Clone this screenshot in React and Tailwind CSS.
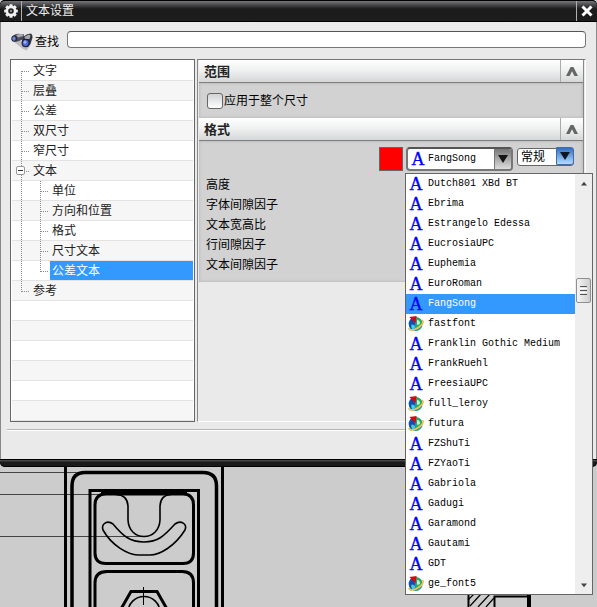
import { useState } from "react";

const sections = [
  { label: "文字", depth: 0 },
  { label: "层叠", depth: 0 },
  { label: "公差", depth: 0 },
  { label: "双尺寸", depth: 0 },
  { label: "窄尺寸", depth: 0 },
  { label: "文本", depth: 0, parent: true },
  { label: "单位", depth: 1 },
  { label: "方向和位置", depth: 1 },
  { label: "格式", depth: 1 },
  { label: "尺寸文本", depth: 1 },
  { label: "公差文本", depth: 1, last: true },
  { label: "参考", depth: 0, last: true },
];

const emptyRows = [0, 1, 2, 3, 4, 5];

const fonts = [
  { name: "Dutch801 XBd BT" },
  { name: "Ebrima" },
  { name: "Estrangelo Edessa" },
  { name: "EucrosiaUPC" },
  { name: "Euphemia" },
  { name: "EuroRoman" },
  { name: "FangSong" },
  { name: "fastfont", native: true },
  { name: "Franklin Gothic Medium" },
  { name: "FrankRuehl" },
  { name: "FreesiaUPC" },
  { name: "full_leroy", native: true },
  { name: "futura", native: true },
  { name: "FZShuTi" },
  { name: "FZYaoTi" },
  { name: "Gabriola" },
  { name: "Gadugi" },
  { name: "Garamond" },
  { name: "Gautami" },
  { name: "GDT" },
  { name: "ge_font5", native: true },
];

const fields = [
  { id: "height", label: "高度" },
  { id: "char-gap", label: "字体间隙因子" },
  { id: "aspect", label: "文本宽高比" },
  { id: "line-gap", label: "行间隙因子" },
  { id: "text-gap", label: "文本间隙因子" },
];

function GearIcon() {
  return (
    <svg viewBox="0 0 14 14" className="h-[14px] w-[14px]" aria-hidden="true">
      <g fill="#f0f0f0">
        {[0, 45, 90, 135].map((a) => (
          <rect key={a} x="5.4" y="0.2" width="3.2" height="13.6" rx="0.6" transform={`rotate(${a} 7 7)`} />
        ))}
        <circle cx="7" cy="7" r="5.4" />
      </g>
      <circle cx="7" cy="7" r="2.8" fill="#222" />
      <circle cx="7" cy="7" r="1.2" fill="#888" />
    </svg>
  );
}

function BinocularsIcon() {
  return (
    <svg viewBox="0 0 22 18" className="h-[18px] w-[22px]" aria-hidden="true">
      <path d="M3 9 L10 8 L19 13 L15.500 17.500 L12 16 Z" fill="#bdbdbd" />
      <path d="M1 4 Q3 1 7 0.8 L13 1.2 L13 6 L7 8.500 Q2 9.500 0.500 6.500 Z" fill="#4a4d55" />
      <path d="M5 2 Q8 0.400 12 1.200 L12.500 3 L7 4.500 Z" fill="#a9adb5" />
      <path d="M12 4 L16 1.2 L20 0.600 Q21.800 2 21.500 4.500 L19.500 11 Q17.500 15 13.500 13.500 Q10 12 11 8 Z" fill="#33353b" />
      <path d="M13.500 4 L17.500 1.500 L19.500 2.500 L18.500 6 L14 6 Z" fill="#a4a8b0" />
      <ellipse cx="3.200" cy="5.600" rx="2.800" ry="3.200" fill="#23263a" />
      <ellipse cx="3" cy="5.600" rx="1.700" ry="2.200" fill="#7185d8" />
      <ellipse cx="14.600" cy="10" rx="4" ry="4.200" fill="#1c2038" />
      <ellipse cx="14.600" cy="10" rx="2.900" ry="3.100" fill="#4f68d6" />
      <ellipse cx="14" cy="9.200" rx="1.400" ry="1.600" fill="#9db0f4" />
    </svg>
  );
}

function GlobeIcon() {
  return (
    <svg viewBox="0 0 16 16" className="h-4 w-4 shrink-0" aria-hidden="true">
      <circle cx="7.6" cy="8" r="7" fill="#1e8fd0" />
      <path d="M0.8 6.500 Q2 3 5 1.800 L7 8 L4.500 14 Q0.800 12 0.800 6.500Z" fill="#0f4fae" />
      <path d="M8 1.200 Q13.500 2 14.300 7 Q14.300 12 9 14.800 Q6 13 8 10 Q9 7 8 1.200Z" fill="#2fae52" />
      <path d="M9 4 Q12 4 12 7.500 Q10.500 9.500 9 8.500Z" fill="#c4f5d0" />
      <path d="M3.500 8.500 Q7 8.500 7 11.500 L5 13.500 Q2.500 12 3.500 8.500Z" fill="#3fd0dc" />
      <path d="M0.700 12 Q1.500 15 6 13.600 Q12 11.500 14.600 7.500 Q15.800 5 14 4.200" fill="none" stroke="#f0bf5c" strokeWidth="1.700" />
      <path d="M1.400 1 L8.600 0 L7.400 7.600 Z" fill="#cf0a14" />
    </svg>
  );
}

function LetterIcon() {
  return (
    <span
      aria-hidden="true"
      className="w-4 shrink-0 text-center font-['Liberation_Serif',serif] text-[18px] leading-5 text-[#0000ff] [-webkit-text-stroke:0.4px_#0000ff]"
    >
      A
    </span>
  );
}

function TreeLines({ row }) {
  return (
    <svg className="h-5 w-[38px] shrink-0" viewBox="0 0 38 20" aria-hidden="true" shapeRendering="crispEdges">
      <g stroke="#8c8c8c" strokeWidth="1" strokeDasharray="1 1">
        <line x1="9.5" y1={row.label === "文字" ? 10 : 0} x2="9.5" y2={row.last && row.depth === 0 ? 11 : 20} />
        {row.depth === 0 && <line x1="10" y1="10.5" x2="18" y2="10.5" />}
        {row.depth === 1 && <line x1="28.5" y1="0" x2="28.5" y2={row.last ? 11 : 20} />}
        {row.depth === 1 && <line x1="29" y1="10.5" x2="37" y2="10.5" />}
      </g>
    </svg>
  );
}

function TreeRow({ row, active, onSelect }) {
  return (
    <li
      role="treeitem"
      aria-level={row.depth + 1}
      aria-selected={active}
      aria-expanded={row.parent ? true : undefined}
      className="relative flex h-5 border-b border-[#e3e3e3] odd:bg-white even:bg-[#f6f6f6]"
    >
      <div className={row.depth ? "flex w-[38px] overflow-hidden" : "flex w-[19px] overflow-hidden"}>
        <TreeLines row={row} />
      </div>
      {row.parent && (
        <button
          type="button"
          aria-label="折叠"
          className="absolute top-[5px] left-1 flex h-[9px] w-[9px] items-center justify-center rounded-[2px] border border-[#999] bg-white"
        >
          <span className="h-px w-[5px] bg-[#333]" />
        </button>
      )}
      <button
        type="button"
        onClick={onSelect}
        className={
          active
            ? "h-[19px] flex-1 bg-[#3399ff] pl-[2px] text-left leading-[21px] text-white"
            : "h-[19px] flex-1 pl-[2px] text-left leading-[21px] text-[#222]"
        }
      >
        {row.label}
      </button>
    </li>
  );
}

function SectionHeader({ title }) {
  return (
    <div className="flex h-[23px] border-b border-[#7f7f7f] bg-[#eceeee]">
      <h2 className="flex-1 bg-linear-to-b from-white via-[#eef0f0] to-[#d5d7d8] pl-[5px] text-[13px] leading-[23px] font-bold text-[#222]">
        {title}
      </h2>
      <button
        type="button"
        aria-label={"折叠" + title}
        className="flex w-[23px] items-center justify-center border-l border-[#aaa] bg-linear-to-b from-white via-[#eef0f0] to-[#d5d7d8]"
      >
        <svg viewBox="0 0 12 9" className="h-[9px] w-3" aria-hidden="true">
          <path d="M0 9 L4.6 0 H7.4 L12 9 H8.4 L6 4.200 L3.600 9Z" fill="#666" />
        </svg>
      </button>
    </div>
  );
}

function FontPicker({ font, onPick }) {
  return (
    <div className="relative">
      <button
        type="button"
        aria-haspopup="listbox"
        aria-expanded="true"
        aria-label="字体"
        className="flex h-6 w-[107px] items-stretch overflow-hidden rounded-[4px] border-2 border-[#777] border-t-[#555] bg-white text-left"
      >
        <span className="flex flex-1 items-center gap-[2px] pl-[2px]">
          <LetterIcon />
          <span className="font-['Liberation_Mono',monospace] text-[10px] text-black">{font}</span>
        </span>
        <span className="flex w-[17px] items-center justify-center border-l border-[#777] bg-linear-to-b from-[#777] via-[#aaa] to-[#ddd]">
          <svg viewBox="0 0 10 8" className="h-2 w-[10px]" aria-hidden="true">
            <path d="M0 0H10L5 8Z" fill="#151515" />
          </svg>
        </span>
      </button>
      <div className="absolute top-[26px] left-[-1px] z-10 flex w-[188px] border border-[#666] bg-white">
        <ul role="listbox" aria-label="字体" className="flex-1">
          {fonts.map((f) => (
            <li
              key={f.name}
              role="option"
              aria-selected={f.name === font}
              onClick={() => onPick(f.name)}
              className={
                f.name === font
                  ? "flex h-5 items-center gap-1 bg-[#3399ff] pl-[2px] font-['Liberation_Mono',monospace] text-[10px] leading-5 whitespace-nowrap text-white"
                  : "flex h-5 items-center gap-1 pl-[2px] font-['Liberation_Mono',monospace] text-[10px] leading-5 whitespace-nowrap text-black"
              }
            >
              {f.native ? <GlobeIcon /> : <LetterIcon />}
              <span>{f.name}</span>
            </li>
          ))}
        </ul>
        <div className="flex w-[17px] flex-col items-center bg-[#eeeeee]">
          <svg viewBox="0 0 8 5" className="mt-[7px] h-[5px] w-2" aria-hidden="true">
            <path d="M1 4.500L4 0.800L7 4.500Z" fill="#444" />
          </svg>
          <div className="mt-[92px] flex h-[25px] w-[15px] flex-col items-center justify-center gap-px rounded-[2px] border border-[#8f8f8f] bg-linear-to-r from-[#f5f5f5] to-[#cfcfcf]">
            <span className="h-px w-[7px] bg-[#555]" />
            <span className="h-px w-[7px] bg-white" />
            <span className="h-px w-[7px] bg-[#555]" />
            <span className="h-px w-[7px] bg-white" />
            <span className="h-px w-[7px] bg-[#555]" />
          </div>
          <svg viewBox="0 0 8 5" className="mt-auto mb-[6px] h-[5px] w-2" aria-hidden="true">
            <path d="M1 0.500H7L4 4.200Z" fill="#444" />
          </svg>
        </div>
      </div>
    </div>
  );
}

function Drawing() {
  return (
    <svg viewBox="0 467 597 140" className="block h-[140px] w-[597px]" aria-hidden="true" fill="none" stroke="#000">
      <g stroke="#444" strokeWidth="1">
        <path d="M0 472.5H82M0 494.5H120M0 536.5H143" />
      </g>
      <path d="M65.5 467V607M222.5 467V607" strokeWidth="3" />
      <path d="M72 607V486Q72 472.5 85 472.5H203Q216.500 472.500 216.500 486V607" strokeWidth="3.500" />
      <path d="M90 607V490.500H198.500V607" strokeWidth="3" />
      <path d="M101 493H187" strokeWidth="4" />
      <path d="M95 505Q95 494 106 494H183Q193.500 494 193.500 505V553Q193.500 563.500 183 563.500H106Q95 563.500 95 553Z" strokeWidth="3" />
      <path d="M95 607V583Q95 571.500 107 571.500H182Q193.500 571.500 193.500 583V607" strokeWidth="3" />
      <g strokeWidth="1.6">
        <path d="M116 494.500Q127.500 495 128 506V520C128.500 530 135 536.500 144 536.500S159.500 530 160 520V506Q160.500 495 171 494.500" />
        <path d="M103 530C101 524 107 519.500 113 524C123 536 130 542 144 542S164 536 175 524C181 519.500 187.500 524 185 530C175 546 160 555 150 555H138C128 554.500 112 546 103 530Z" />
        <circle cx="144" cy="612.500" r="16" />
      </g>
      <path d="M121 609L131 591.500H157L167 609" strokeWidth="3" />
      <path d="M143.500 587V605" strokeWidth="1" />
      <g strokeWidth="1.200">
        <path d="M470 606L481 594M478 607L490 594M486 607L494 598M468 600L474 594" />
      </g>
      <path d="M468.500 590V607M494.500 607V596.500H530" strokeWidth="2" />
      <path d="M529 590V607" strokeWidth="4" />
    </svg>
  );
}

export default function App() {
  const [current, setCurrent] = useState("公差文本");
  const [font, setFont] = useState("FangSong");

  return (
    <main className="min-h-screen overflow-hidden bg-[#cccccc] font-['Liberation_Sans','Noto_Sans_CJK_SC',sans-serif] text-[12px] leading-5 text-black">
      <section aria-labelledby="dialog-title" className="rounded-[5px] bg-black">
        <header className="flex h-[22px] items-stretch rounded-t-[5px] border-y border-black bg-linear-to-b from-[#77777b] to-[#1c1c1c] to-40%">
          <div className="flex w-[22px] items-center justify-center border-r border-[#b0b0b0]">
            <GearIcon />
          </div>
          <h1 id="dialog-title" className="flex-1 pl-1 leading-[21px] text-[#eeeeee]">
            文本设置
          </h1>
          <button type="button" aria-label="关闭" className="flex w-[21px] items-center justify-center border-l border-[#b0b0b0]">
            <svg viewBox="0 0 12 12" className="h-3 w-3" aria-hidden="true">
              <path d="M1.500 1.500L10.500 10.500M10.500 1.500L1.500 10.500" stroke="#fff" strokeWidth="3" />
            </svg>
          </button>
        </header>

        <div className="border-x border-[#888] bg-[#eaeaea]">
          <div className="flex items-start pt-[9px] pr-[10px] pl-[10px]">
            <div className="pt-[2px]">
              <BinocularsIcon />
            </div>
            <label htmlFor="find" className="pt-px pl-[2px]">
              查找
            </label>
            <input
              id="find"
              type="text"
              className="ml-2 h-[17px] min-w-0 flex-1 rounded-[4px] border border-[#777] border-t-[#555] bg-white px-1 outline-none"
            />
          </div>

          <div className="mt-[7px] flex gap-[2px] pr-[10px] pl-[9px]">
            <nav aria-label="设置类别" className="w-[185px] shrink-0 border border-[#666] bg-white px-px pt-px">
              <ul role="tree">
                {sections.map((row) => (
                  <TreeRow key={row.label} row={row} active={row.label === current} onSelect={() => setCurrent(row.label)} />
                ))}
                {emptyRows.map((n) => (
                  <li key={n} aria-hidden="true" className="h-5 border-b border-[#e3e3e3] odd:bg-white even:bg-[#f6f6f6]" />
                ))}
              </ul>
            </nav>

            <div className="min-w-0 flex-1 border-t border-r border-b border-l border-t-[#777] border-r-white border-b-white border-l-[#888]">
              <div className="mr-px border-r border-[#888] pl-px">
                <SectionHeader title="范围" />
                <div className="flex h-[35px] items-center bg-[#d2d2d2] pl-2 inset-shadow-[0_0_3px_#aaa]">
                  <input
                    id="apply-all"
                    type="checkbox"
                    className="h-4 w-4 appearance-none rounded-[3px] border border-[#666] bg-linear-to-b from-[#d0d2d4] to-white"
                  />
                  <label htmlFor="apply-all" className="pl-px">
                    应用于整个尺寸
                  </label>
                </div>
                <SectionHeader title="格式" />
                <div className="h-[141px] bg-[#d2d2d2] pt-[6px] pr-[9px] pl-[7px] inset-shadow-[0_0_3px_#aaa]">
                  <div className="flex items-start justify-end">
                    <button type="button" aria-label="颜色" className="mr-[3px] h-6 w-6 border border-[#666] bg-[#ff0000]" />
                    <FontPicker font={font} onPick={setFont} />
                    <div className="relative ml-1">
                      <select
                        aria-label="样式"
                        defaultValue="常规"
                        className="h-[18px] w-[57px] appearance-none rounded-[3px] border border-[#666] bg-white pl-[3px] leading-4 outline-none"
                      >
                        <option>常规</option>
                      </select>
                      <span className="pointer-events-none absolute top-0 right-0 flex h-[18px] w-[18px] items-center justify-center rounded-r-[3px] border border-[#3d6ea8] bg-linear-to-b from-[#2f6fc0] to-[#b5dcff]">
                        <svg viewBox="0 0 10 8" className="h-2 w-[10px]" aria-hidden="true">
                          <path d="M0 0H10L5 8Z" fill="#101522" />
                        </svg>
                      </span>
                    </div>
                  </div>
                  <div className="pt-1">
                    {fields.map((f) => (
                      <div key={f.id} className="flex h-5 items-center justify-between">
                        <label htmlFor={f.id}>{f.label}</label>
                        <input id={f.id} type="text" className="h-4 w-[160px] border border-[#777] bg-white" />
                      </div>
                    ))}
                  </div>
                </div>
              </div>
            </div>
          </div>

          <div className="mx-[6px] mt-[7px] h-[30px] border-t border-[#b4b4b4]">
            <div className="h-px bg-white" />
          </div>
        </div>
        <footer className="h-2 rounded-b-[5px] border-y border-black bg-linear-to-b from-[#555] to-[#1a1a1a] to-40%" />
      </section>
      <Drawing />
    </main>
  );
}
